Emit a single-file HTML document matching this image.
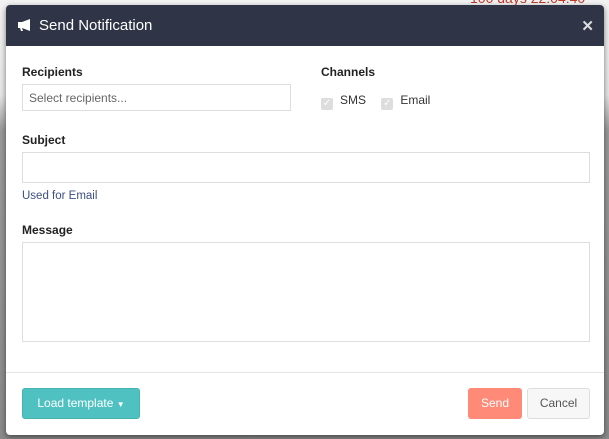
<!DOCTYPE html>
<html><head><style>
*{box-sizing:border-box;margin:0;padding:0}
body{width:609px;height:439px;overflow:hidden;font-family:"Liberation Sans",sans-serif;background:linear-gradient(#f3f3f3 0,#e6e6e6 95px,#9a9a9a 130px,#8a8a8a 439px);position:relative}
.modal{position:absolute;left:6px;top:5px;width:598px;height:430px;background:#fff;border-radius:4px;box-shadow:0 2px 6px rgba(0,0,0,.5);overflow:hidden}
.hd{height:41px;background:#2f3546;color:#fff;font-size:15px;padding:12px 0 0 11px}
.x{position:absolute;right:10px;top:12px;color:#ddd;font-size:15px;font-weight:bold}
label{position:absolute;font-size:12px;font-weight:bold;color:#222}
.inp{position:absolute;border:1px solid #ddd;background:#fff;font-size:12px;color:#666;padding:6px 6px}
.cb{display:inline-block;width:12px;height:12px;background:#ddd;border-radius:2px;vertical-align:-2px;margin-right:7px;color:#fff;font-size:10px;text-align:center;line-height:12px}
.btn{position:absolute;top:383px;height:31px;border-radius:3px;font-size:12px;text-align:center;line-height:31px}
</style></head><body>
<div style="position:absolute;left:470px;top:-10px;color:#c0392b;font-size:14px">100 days 22:04:40</div>
<div class="modal">
<div class="hd"><svg width="16" height="12" viewBox="0 0 16 12" style="vertical-align:-1px;margin-right:6px"><path d="M1 3h4l8-3v12l-8-3H1z" fill="#fff"/><path d="M3 9l1 3h2l-1-3" fill="#fff"/></svg>Send Notification</div>
<div class="x">✕</div>
<label style="left:16px;top:60px">Recipients</label>
<div class="inp" style="left:16px;top:79px;width:269px;height:27px">Select recipients...</div>
<label style="left:315px;top:60px">Channels</label>
<div style="position:absolute;left:315px;top:88px;font-size:12px;color:#333"><span class="cb">✓</span>SMS <span style="display:inline-block;width:12px"></span><span class="cb">✓</span>Email</div>
<label style="left:16px;top:128px">Subject</label>
<div class="inp" style="left:16px;top:147px;width:568px;height:31px"></div>
<div style="position:absolute;left:16px;top:185px;font-size:11.5px;color:#3d4f85">Used for Email</div>
<label style="left:16px;top:218px">Message</label>
<div class="inp" style="left:16px;top:237px;width:568px;height:100px"></div>
<div style="position:absolute;left:0;top:367px;width:598px;border-top:1px solid #e5e5e5"></div>
<div class="btn" style="left:16px;width:118px;background:#4fc1c0;color:#fff;border:1px solid #45b3b2;line-height:29px">Load template <span style="font-size:8px">▼</span></div>
<div class="btn" style="left:462px;width:54px;background:#fe8a77;color:#fff">Send</div>
<div class="btn" style="left:521px;width:63px;background:#f7f7f7;color:#555;border:1px solid #ddd;line-height:29px">Cancel</div>
</div>
</body></html>
